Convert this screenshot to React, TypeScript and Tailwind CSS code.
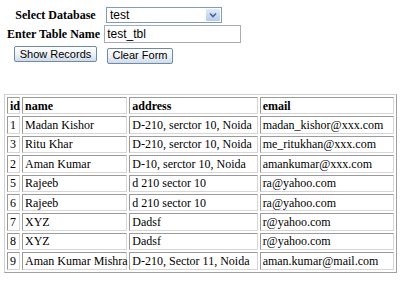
const ROWS = [
  { id: '1', name: 'Madan Kishor', address: 'D-210, serctor 10, Noida', email: 'madan_kishor@xxx.com' },
  { id: '3', name: 'Ritu Khar', address: 'D-210, serctor 10, Noida', email: 'me_ritukhan@xxx.com' },
  { id: '2', name: 'Aman Kumar', address: 'D-10, serctor 10, Noida', email: 'amankumar@xxx.com' },
  { id: '5', name: 'Rajeeb', address: 'd 210 sector 10', email: 'ra@yahoo.com' },
  { id: '6', name: 'Rajeeb', address: 'd 210 sector 10', email: 'ra@yahoo.com' },
  { id: '7', name: 'XYZ', address: 'Dadsf', email: 'r@yahoo.com' },
  { id: '8', name: 'XYZ', address: 'Dadsf', email: 'r@yahoo.com' },
  { id: '9', name: 'Aman Kumar Mishra', address: 'D-210, Sector 11, Noida', email: 'aman.kumar@mail.com' },
];

const cell =
  'h-[17.4px] border border-t-[#9a9a9a] border-l-[#9a9a9a] border-b-[#d6d6d6] border-r-[#d6d6d6] px-[2px] py-0 text-left align-middle leading-[14px] whitespace-nowrap';

function XpButton({ label, width }: { label: string; width: string }) {
  return (
    <button
      className={`${width} h-[16px] rounded-[2px] border border-[#6f8aa8] bg-gradient-to-b from-[#ffffff] via-[#eef2f7] to-[#cfdbe8] font-['Liberation_Sans',sans-serif] text-[11px] leading-[13px] text-black`}
    >
      {label}
    </button>
  );
}

export default function App() {
  return (
    <div className="h-[285px] w-[408px] overflow-hidden bg-white font-['Liberation_Serif',serif] text-[12px] text-black">
      <div className="pt-[7px] pl-[7px]">
        <div className="flex h-[16px] items-center">
          <span className="w-[97px] text-center font-bold">Select Database</span>
          <div className="ml-[2px] flex h-[16px] w-[116px] items-center border border-[#7f9db9] bg-white">
            <span className="flex-1 pl-[3px] font-['Liberation_Sans',sans-serif] text-[12px] leading-[14px]">test</span>
            <span className="m-[1px] flex h-[12px] w-[14px] items-center justify-center rounded-[1px] bg-gradient-to-b from-[#dfeafb] to-[#b5cbf0]">
              <svg width="8" height="6" viewBox="0 0 8 6">
                <path d="M1 1.5 L4 4.5 L7 1.5" fill="none" stroke="#4d6185" strokeWidth="1.6" />
              </svg>
            </span>
          </div>
        </div>
        <div className="mt-[2px] flex h-[18px] items-center">
          <span className="whitespace-nowrap font-bold">Enter Table Name</span>
          <div className="ml-[4px] flex h-[18px] w-[137px] items-center border border-[#a5acb5] bg-white pl-[2px] font-['Liberation_Sans',sans-serif] text-[12px]">
            test_tbl
          </div>
        </div>
        <div className="mt-[3px] flex pl-[7px]">
          <XpButton label="Show Records" width="w-[83px]" />
          <div className="ml-[10px]">
            <XpButton label="Clear Form" width="w-[66px]" />
          </div>
        </div>
      </div>

      <table className="mt-[30px] ml-[4px] w-[393px] table-fixed border-separate border-spacing-[2px] border border-t-[#d0d0d0] border-l-[#d0d0d0] border-b-[#a0a0a0] border-r-[#a0a0a0]">
        <colgroup>
          <col className="w-[13px]" />
          <col className="w-[105px]" />
          <col className="w-[128px]" />
          <col className="w-[134px]" />
        </colgroup>
        <thead>
          <tr>
            <th className={`${cell} px-[1px] font-bold`}>id</th>
            <th className={`${cell} font-bold`}>name</th>
            <th className={`${cell} font-bold`}>address</th>
            <th className={`${cell} font-bold`}>email</th>
          </tr>
        </thead>
        <tbody>
          {ROWS.map((r) => (
            <tr key={r.id}>
              <td className={`${cell} px-[1px]`}>{r.id}</td>
              <td className={cell}>{r.name}</td>
              <td className={cell}>{r.address}</td>
              <td className={cell}>{r.email}</td>
            </tr>
          ))}
        </tbody>
      </table>
    </div>
  );
}
